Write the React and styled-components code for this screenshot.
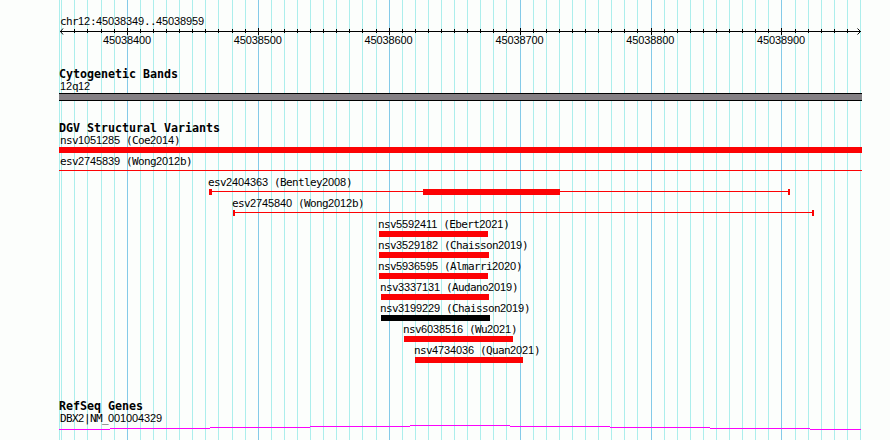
import React from "react";
import styled, { createGlobalStyle } from "styled-components";

const GlobalStyle = createGlobalStyle`
  body { margin: 0; background: #fcfefc; }
`;

const Browser = styled.main`
  position: relative;
  width: 890px;
  height: 440px;
  overflow: hidden;
  background: #fcfefc;
  color: #000;
`;

const Backdrop = styled.svg`
  position: absolute;
  inset: 0;
  z-index: 0;
`;

const Tracks = styled.div`
  position: relative;
  z-index: 1;
  display: flex;
  flex-direction: column;
  padding: 16px 28px 0 59px;
`;

const Track = styled.section`
  display: flex;
  flex-direction: column;
  margin-top: ${(p) => p.$gap || 0}px;
`;

const Heading = styled.h2`
  margin: 0;
  height: 12px;
  font: bold 11.66px/10px "DejaVu Sans Mono", monospace;
  letter-spacing: -0.02px;
  white-space: pre;
`;

const Label = styled.div`
  height: 12px;
  padding-left: ${(p) => p.$x}px;
  font: 11px/10px "DejaVu Sans Mono", monospace;
  letter-spacing: -0.622px;
  white-space: pre;
`;

const Digits = styled.span`
  font: 11px/10px "Liberation Sans", sans-serif;
  letter-spacing: -0.118px;
`;

const Ruler = styled.svg`
  display: block;
  width: 803px;
  height: 7px;
`;

const Scale = styled.div`
  display: grid;
  grid-template-columns: repeat(6, 130.8px);
  margin-left: 44px;
`;

const Band = styled.div`
  box-sizing: border-box;
  height: 8px;
  background: #848084;
  border: solid #000;
  border-width: 1px 0;
`;

const Feature = styled.div`
  display: flex;
  flex-direction: column;
  height: 21px;
`;

const Glyph = styled.svg`
  display: block;
  width: 803px;
  height: 6px;
  shape-rendering: crispEdges;
`;

const LEFT = 59;
const GRID = [
  59, 61, 74, 87, 101, 114, 127, 140, 153, 166, 179, 192, 205, 218, 232, 245,
  258, 271, 284, 297, 310, 323, 336, 349, 362, 376, 389, 402, 415, 428, 441,
  454, 467, 480, 493, 506, 520, 533, 546, 559, 572, 585, 598, 611, 624, 637,
  651, 664, 677, 690, 703, 716, 729, 742, 755, 768, 781, 795, 808, 821, 834,
  847, 860,
];
const MAJOR = [127, 258, 389, 520, 651, 781];
const POSITIONS = ["45038400", "45038500", "45038600", "45038700", "45038800", "45038900"];

const VARIANTS = [
  { name: "nsv1051285 (Coe2014)", label: 60, rects: [[59, 0, 803, 6]] },
  { name: "esv2745839 (Wong2012b)", label: 60, rects: [[59, 2, 803, 1]] },
  { name: "esv2404363 (Bentley2008)", label: 208, rects: [[209, 0, 3, 6], [209, 2, 580, 1], [423, 0, 137, 6], [788, 0, 2, 6]] },
  { name: "esv2745840 (Wong2012b)", label: 232, rects: [[233, 0, 2, 6], [233, 2, 580, 1], [812, 0, 2, 6]] },
  { name: "nsv5592411 (Ebert2021)", label: 378, rects: [[379, 0, 109, 6]] },
  { name: "nsv3529182 (Chaisson2019)", label: 378, rects: [[379, 0, 110, 6]] },
  { name: "nsv5936595 (Almarri2020)", label: 378, rects: [[379, 0, 109, 6]] },
  { name: "nsv3337131 (Audano2019)", label: 380, rects: [[381, 0, 108, 6]] },
  { name: "nsv3199229 (Chaisson2019)", label: 380, rects: [[381, 0, 109, 6]], color: "#000" },
  { name: "nsv6038516 (Wu2021)", label: 403, rects: [[404, 0, 109, 6]] },
  { name: "nsv4734036 (Quan2021)", label: 414, rects: [[415, 0, 108, 6]] },
];

function Text({ x = 0, children }) {
  return (
    <Label $x={x}>
      {children.split(/(\d+)/).map((part, i) => (i % 2 ? <Digits key={i}>{part}</Digits> : part))}
    </Label>
  );
}

export default function App() {
  return (
    <>
      <GlobalStyle />
      <Browser>
        <Backdrop width="890" height="440" shapeRendering="crispEdges">
          {GRID.map((x) => (
            <rect key={x} x={x} y="0" width="1" height="440" fill={MAJOR.includes(x) ? "#84cae8" : "#aceeec"} />
          ))}
        </Backdrop>
        <Tracks>
          <Track>
            <Text x={1}>chr12:45038349..45038959</Text>
            <Ruler>
              <g shapeRendering="crispEdges">
                <rect x="1" y="3" width="801" height="1" />
                {GRID.slice(2, -1).map((x) =>
                  MAJOR.includes(x) ? (
                    <rect key={x} x={x - LEFT} y="0" width="1" height="7" />
                  ) : (
                    <rect key={x} x={x - LEFT} y="1" width="1" height="4" />
                  )
                )}
              </g>
              <path d="M4 0.5L1.5 3.5L4 6.5M798.5 0.5L801.5 3.5L798.5 6.5" fill="none" stroke="#000" />
            </Ruler>
            <Scale>
              {POSITIONS.map((p) => (
                <Text key={p}>{p}</Text>
              ))}
            </Scale>
          </Track>
          <Track $gap={22}>
            <Heading>Cytogenetic Bands</Heading>
            <Text x={1}>12q12</Text>
            <Band />
          </Track>
          <Track $gap={22}>
            <Heading>DGV Structural Variants</Heading>
            {VARIANTS.map((v) => (
              <Feature key={v.name}>
                <Text x={v.label - LEFT}>{v.name}</Text>
                <Glyph fill={v.color || "#fc0204"}>
                  {v.rects.map(([x, y, w, h], i) => (
                    <rect key={i} x={x - LEFT} y={y} width={w} height={h} />
                  ))}
                </Glyph>
              </Feature>
            ))}
          </Track>
          <Track $gap={35}>
            <Heading>RefSeq Genes</Heading>
            <Text x={1}>DBX2|NM_001004329</Text>
            <Glyph fill="#fc02fc">
              {[4, 3, 2, 1, 0, 1, 2, 3, 4].map((y, i) => {
                const start = i === 0 ? 0 : i * 100 - 49;
                const end = i === 8 ? 802 : i * 100 + 51;
                return <rect key={i} x={start} y={y} width={end - start} height="1" />;
              })}
            </Glyph>
          </Track>
        </Tracks>
      </Browser>
    </>
  );
}
